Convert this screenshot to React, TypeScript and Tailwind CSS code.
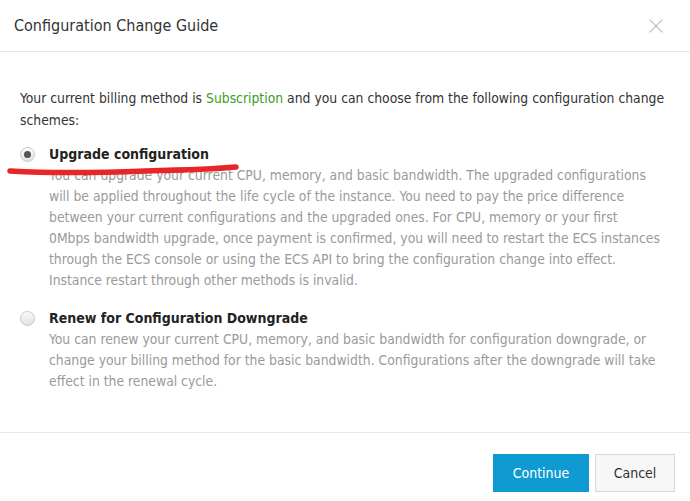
import { X } from 'lucide-react';

const font = "font-['DejaVu_Sans_Condensed','DejaVu_Sans',sans-serif]";

const upgradeLines = [
  'You can upgrade your current CPU, memory, and basic bandwidth. The upgraded configurations',
  'will be applied throughout the life cycle of the instance. You need to pay the price difference',
  'between your current configurations and the upgraded ones. For CPU, memory or your first',
  '0Mbps bandwidth upgrade, once payment is confirmed, you will need to restart the ECS instances',
  'through the ECS console or using the ECS API to bring the configuration change into effect.',
  'Instance restart through other methods is invalid.',
];

const downgradeLines = [
  'You can renew your current CPU, memory, and basic bandwidth for configuration downgrade, or',
  'change your billing method for the basic bandwidth. Configurations after the downgrade will take',
  'effect in the renewal cycle.',
];

const Radio = ({ checked }: { checked?: boolean }) => (
  <span className="mt-[3px] flex h-[15px] w-[15px] shrink-0 items-center justify-center rounded-full border border-[#c8c8c8] bg-gradient-to-b from-[#fafafa] to-[#e2e2e2]">
    {checked && <span className="h-[7px] w-[7px] rounded-full bg-[#555]" />}
  </span>
);

const Option = ({ title, lines, checked }: { title: string; lines: string[]; checked?: boolean }) => (
  <div className="flex gap-[14px]">
    <Radio checked={checked} />
    <div>
      <div className="text-[14px] font-bold leading-[21px] text-[#222]">{title}</div>
      {lines.map((l) => (
        <div key={l} className="whitespace-nowrap leading-[21px] text-[#9a9a9a]">
          {l}
        </div>
      ))}
    </div>
  </div>
);

const App = () => {
  return (
    <div className={`h-[501px] w-[690px] overflow-hidden bg-white text-[13.8px] text-[#333] ${font}`}>
      <div className="flex h-[52px] items-center justify-between border-b border-[#e6e6e6] pl-[14px] pr-[22px]">
        <h2 className="text-[16px] text-[#333]">Configuration Change Guide</h2>
        <X size={24} strokeWidth={1.2} className="text-[#c4c4c4]" />
      </div>

      <div className="relative h-[380px] px-5 pt-[35px]">
        <p className="leading-[22px]">
          <span className="whitespace-nowrap">
            Your current billing method is <span className="text-[#3a9d23]">Subscription</span> and you can
            choose from the following configuration change
          </span>
          <br />
          schemes:
        </p>

        <div className="mt-[13px]">
          <Option checked title="Upgrade configuration" lines={upgradeLines} />
        </div>
        <div className="mt-[17px]">
          <Option title="Renew for Configuration Downgrade" lines={downgradeLines} />
        </div>

        <svg className="absolute left-[5px] top-[109px]" width="236" height="16" viewBox="0 0 236 16">
          <path
            d="M5 10 C 40 12, 90 12, 140 10 C 180 9, 210 8, 231 6"
            stroke="#e8262a"
            strokeWidth="5.5"
            strokeLinecap="round"
            fill="none"
          />
        </svg>
      </div>

      <div className="flex h-[69px] items-start justify-end gap-[6px] border-t border-[#e6e6e6] pr-[15px] pt-[21px]">
        <button className="h-[38px] w-[96px] bg-[#0f9bd1] text-[14px] text-white">Continue</button>
        <button className="h-[38px] w-[80px] border border-[#d9d9d9] bg-[#f7f7f7] text-[14px] text-[#333]">
          Cancel
        </button>
      </div>
    </div>
  );
};

export default App;
